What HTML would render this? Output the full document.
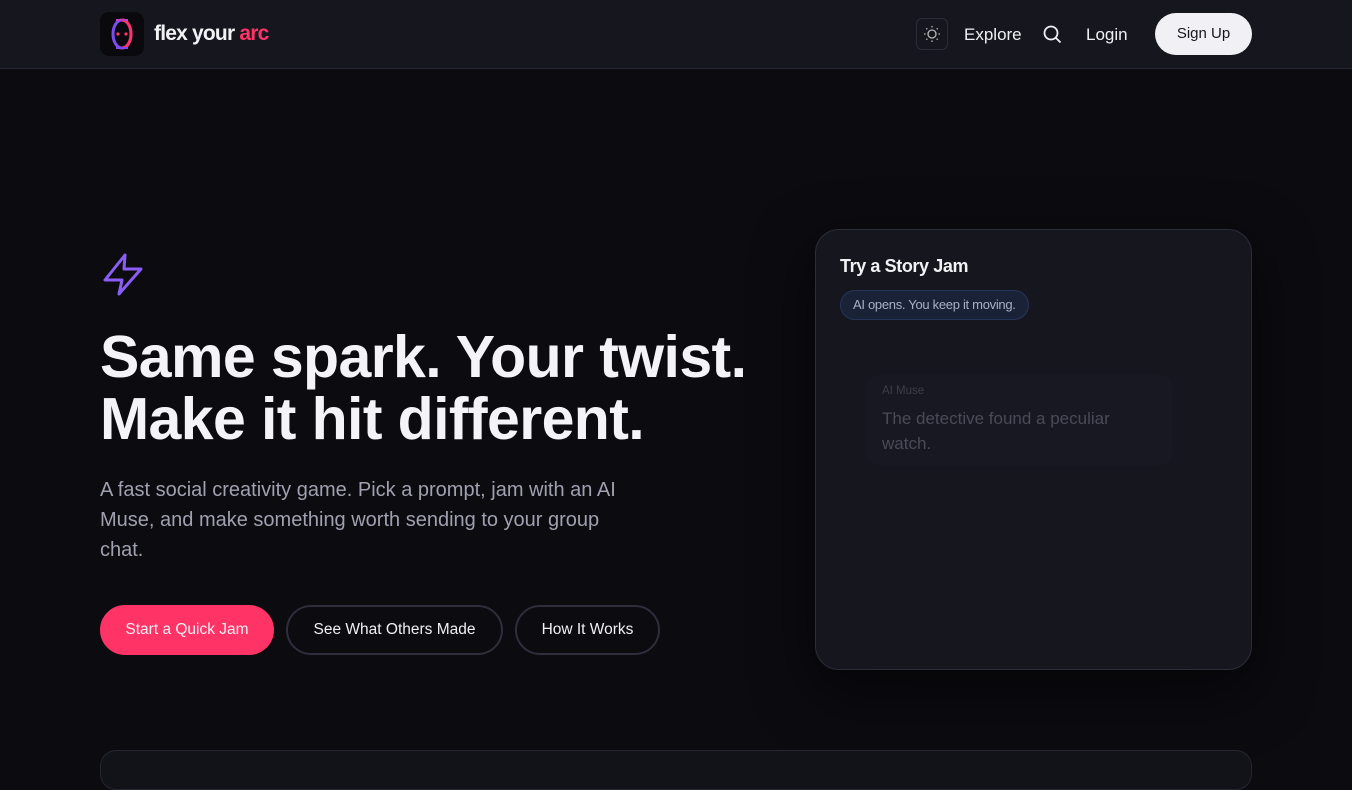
<!DOCTYPE html>
<html><head><meta charset="utf-8"><style>
*{margin:0;padding:0;box-sizing:border-box}
body{width:1352px;height:760px;overflow:hidden;background:#0b0b10;font-family:"Liberation Sans",sans-serif;color:#f2f2f5;position:relative}
.nav{position:absolute;left:0;top:0;width:1352px;height:69px;background:#16161f;border-bottom:1px solid #2a2a36}
.logo{position:absolute;left:100px;top:12px;width:44px;height:44px;border-radius:9px;background:#0a0a0e}
.brand{position:absolute;left:154px;top:22px;font-size:21px;font-weight:bold;letter-spacing:-0.8px}
.brand span{color:#ff3366}
.sun{position:absolute;left:916px;top:18px;width:32px;height:32px;border:1px solid #2c2c38;border-radius:6px}
.nl{position:absolute;top:25px;font-size:17px;color:#f0f0f4}
.su{position:absolute;left:1155px;top:13px;width:97px;height:42px;border-radius:21px;background:#f1f1f5;color:#16161f;font-size:15px;text-align:center;line-height:42px}
h1{position:absolute;left:100px;top:326px;font-size:59px;line-height:62px;font-weight:bold;letter-spacing:-0.6px;color:#f4f4f8}
.p{position:absolute;left:100px;top:475px;width:540px;font-size:20px;line-height:30px;color:#a0a0b0}
.b{position:absolute;top:605px;height:50px;border-radius:25px;font-size:15.5px;line-height:46px;text-align:center;color:#f0f0f4;border:2px solid #2e2e3c}
.card{position:absolute;left:815px;top:229px;width:437px;height:441px;border-radius:24px;background:#16161f;border:1px solid #2c2c3a;box-shadow:0 20px 60px rgba(0,0,0,.5)}
.bottom{position:absolute;left:100px;top:750px;width:1152px;height:40px;border-radius:16px;border:1px solid #262632;background:#121219}
</style></head><body>
<div class="nav">
<div class="logo"><svg width="44" height="44" viewBox="0 0 44 44"><ellipse cx="22" cy="22" rx="9" ry="14" fill="none" stroke="#7a4df0" stroke-width="3"/><path d="M22 8a9 14 0 0 1 0 28" fill="none" stroke="#ff3366" stroke-width="3"/><line x1="16" y1="8" x2="28" y2="8" stroke="#c040c0" stroke-width="2"/><line x1="16" y1="36" x2="28" y2="36" stroke="#7a4df0" stroke-width="2"/><circle cx="18" cy="22" r="1.6" fill="#ff3366"/><circle cx="26" cy="22" r="1.6" fill="#ff3366"/></svg></div>
<div class="brand">flex your <span>arc</span></div>
<div class="sun"><svg width="30" height="30" viewBox="0 0 30 30" fill="none" stroke="#bbb" stroke-width="1.3"><circle cx="15" cy="15" r="4"/><path d="M15 7v1.5M15 21.5V23M7 15h1.5M21.5 15H23M9.3 9.3l1 1M19.7 19.7l1 1M9.3 20.7l1-1M19.7 10.3l1-1"/></svg></div>
<div class="nl" style="left:964px">Explore</div>
<svg style="position:absolute;left:1043px;top:25px" width="19" height="19" viewBox="0 0 19 19" fill="none" stroke="#f0f0f4" stroke-width="1.8"><circle cx="8" cy="8" r="6.5"/><path d="M13 13l4.5 4.5"/></svg>
<div class="nl" style="left:1086px">Login</div>
<div class="su">Sign Up</div>
</div>
<svg style="position:absolute;left:102px;top:252px" width="44" height="46" viewBox="0 0 44 46" fill="none" stroke="#8b5cf6" stroke-width="3" stroke-linejoin="round" stroke-linecap="round"><path d="M23 3L3 28h17l-3 14 22-25H22z"/></svg>
<h1>Same spark. Your twist.<br>Make it hit different.</h1>
<div class="p">A fast social creativity game. Pick a prompt, jam with an AI Muse, and make something worth sending to your group chat.</div>
<div class="b" style="left:100px;width:174px;background:#ff3366;border-color:#ff3366">Start a Quick Jam</div>
<div class="b" style="left:286px;width:217px">See What Others Made</div>
<div class="b" style="left:515px;width:145px">How It Works</div>
<div class="card">
<div style="position:absolute;left:24px;top:26px;font-size:18px;font-weight:bold;letter-spacing:-0.4px">Try a Story Jam</div>
<div style="position:absolute;left:24px;top:60px;height:30px;padding:0 12px;border-radius:15px;background:#1a2238;border:1px solid #26365a;font-size:13px;line-height:28px;color:#a8b0c4;letter-spacing:-0.3px">AI opens. You keep it moving.</div>
<div style="position:absolute;left:50px;top:145px;width:306px;height:90px;border-radius:12px;background:#181822">
<div style="position:absolute;left:16px;top:10px;font-size:11.5px;color:#3e3e4c">AI Muse</div>
<div style="position:absolute;left:16px;top:31px;width:270px;font-size:17px;line-height:25px;color:#4a4a58">The detective found a peculiar watch.</div>
</div>
</div>
<div class="bottom"></div>
</body></html>
